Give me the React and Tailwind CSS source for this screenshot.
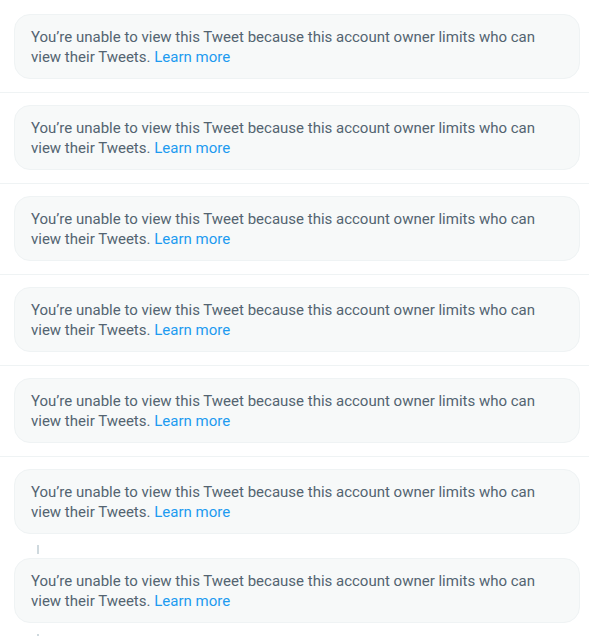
import React from "react";

function Card() {
  return (
    <div className="rounded-2xl border border-[#eff3f4] bg-[#f7f9f9] px-4 pt-[12px] pb-[11px] text-[15px] leading-5 text-[#536471]">
      You’re unable to view this Tweet because this account owner limits who can view their Tweets.{" "}
      <span className="text-[#1d9bf0]">Learn more</span>
    </div>
  );
}

export default function App() {
  const items = [0, 1, 2, 3, 4];
  return (
    <div className="w-[589px] h-[636px] overflow-hidden bg-white" style={{ fontFamily: 'Roboto, "Noto Sans", sans-serif' }}>
      {items.map((i) => (
        <div key={i} className={`border-b border-[#eff3f4] pl-[14px] pr-[9px] pb-[13px] ${i === 0 ? "pt-[14px]" : "pt-[12px]"}`}>
          <Card />
        </div>
      ))}
      <div className="pl-[14px] pr-[9px] pt-[12px]">
        <Card />
        <div className="flex h-[24px] pl-[23px] pt-[11px]">
          <div className="w-[2px] h-[9px] bg-[#cfd9de]" />
        </div>
        <Card />
        <div className="flex pl-[23px] pt-[11px]">
          <div className="w-[2px] h-[9px] bg-[#cfd9de]" />
        </div>
      </div>
    </div>
  );
}
